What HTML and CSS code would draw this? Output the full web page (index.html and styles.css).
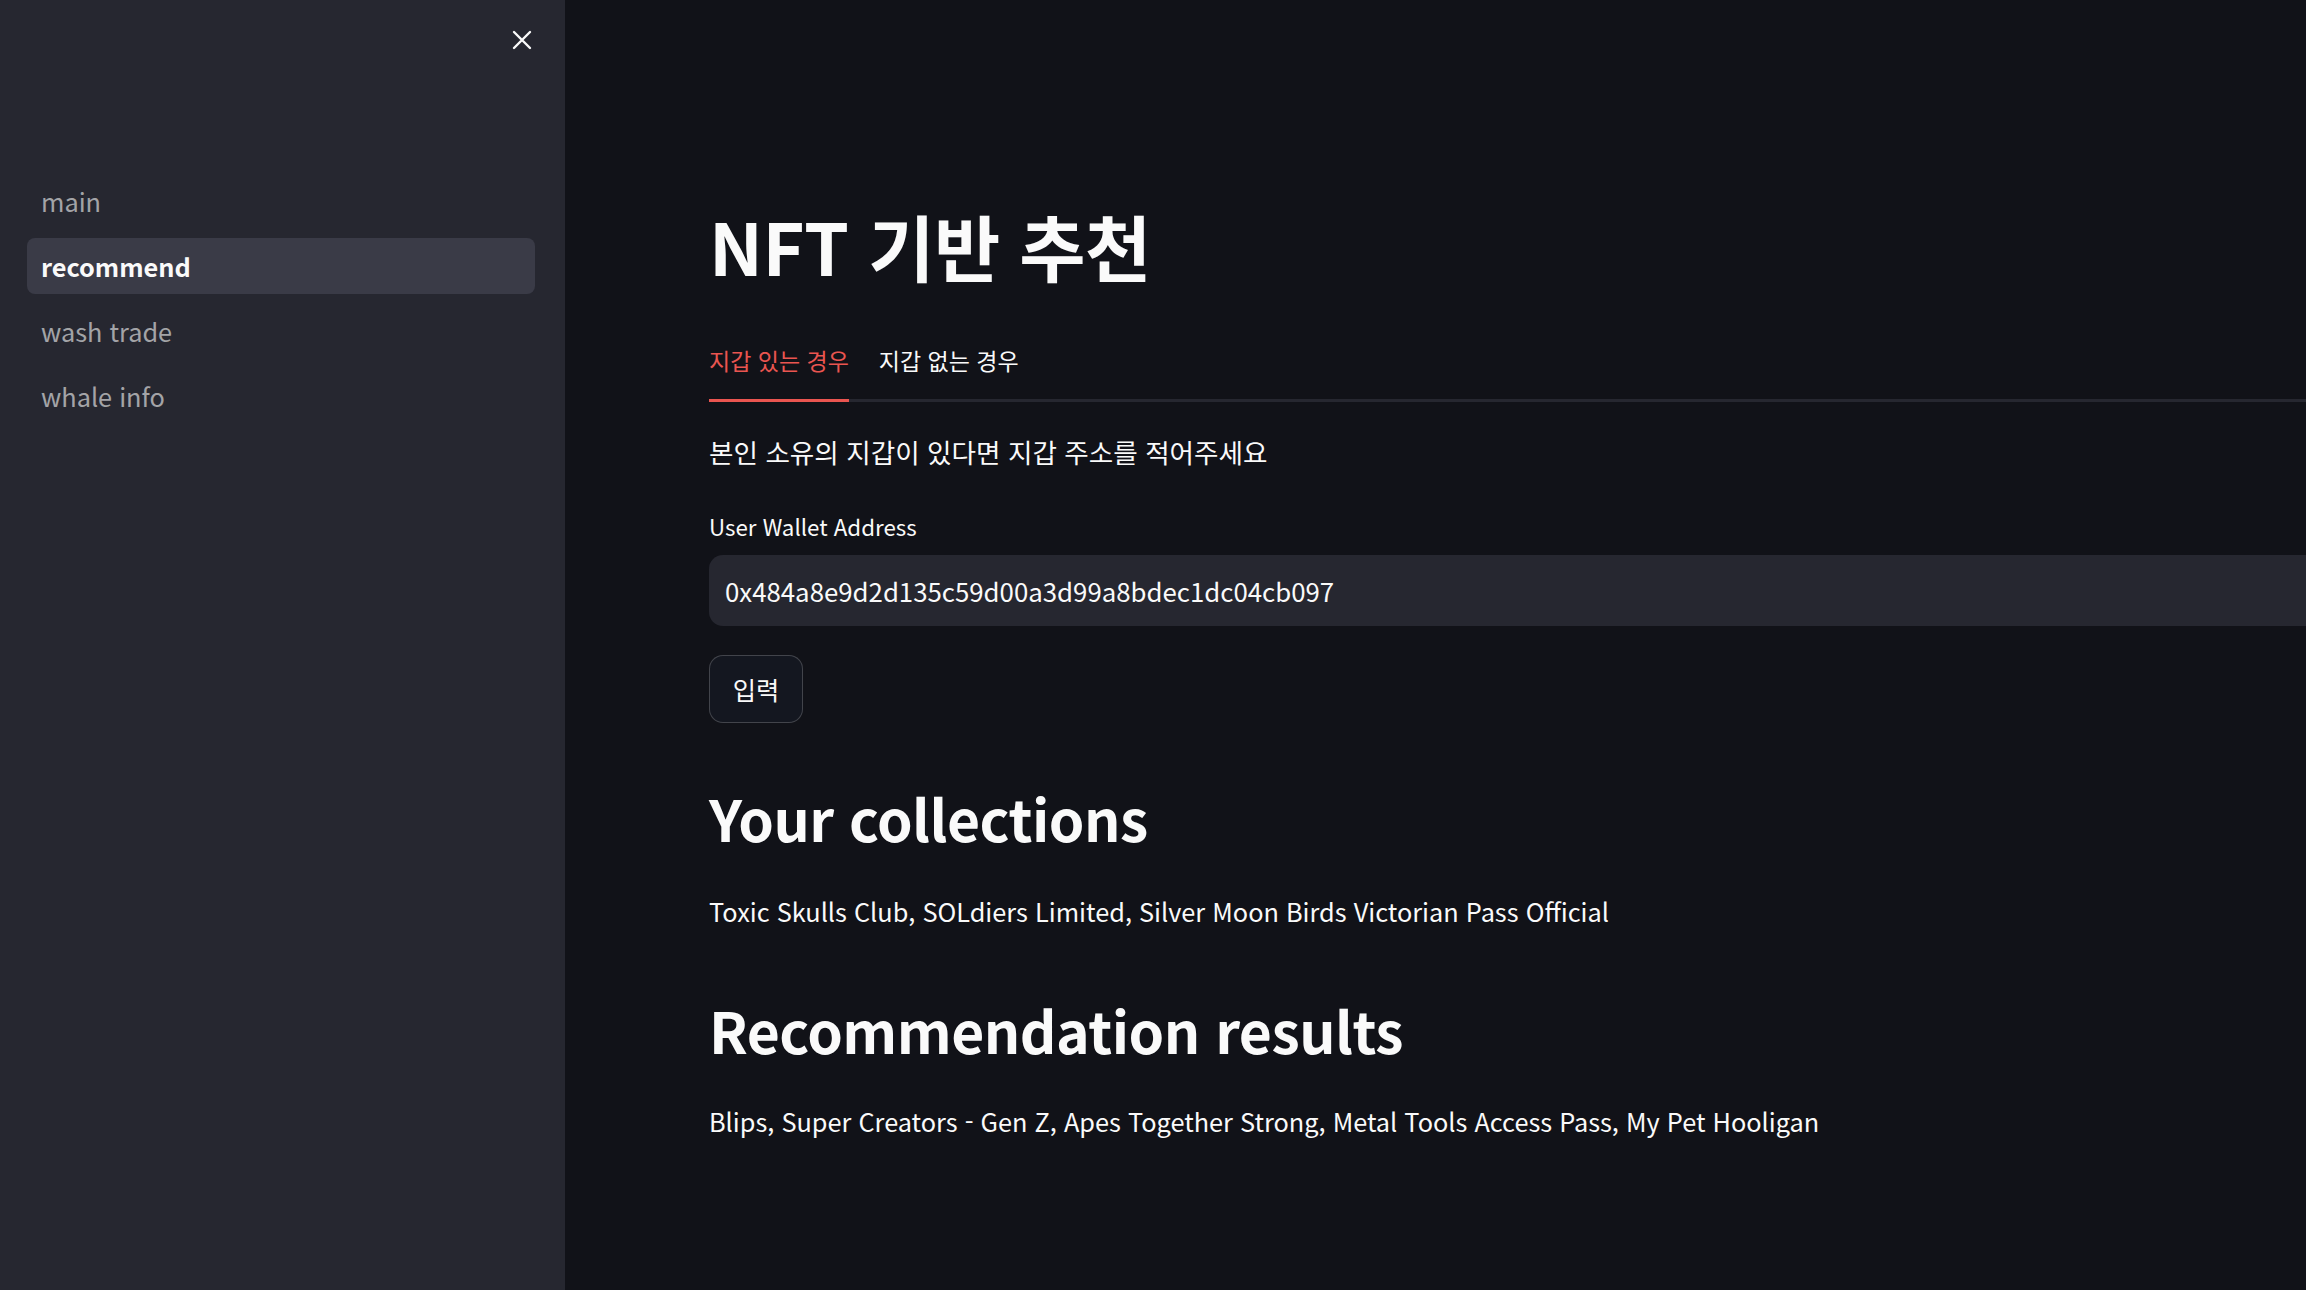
FILE: index.html
```html
<!DOCTYPE html>
<html lang="ko">
<head>
<meta charset="utf-8">
<title>recommend</title>
<link rel="stylesheet" href="styles.css">
</head>
<body>
<div class="app">
  <aside class="sidebar">
    <div class="sidebar-head">
      <button class="close-btn" aria-label="close">
        <svg width="20" height="20" viewBox="0 0 20 20"><path d="M2 2 L18 18 M18 2 L2 18" stroke="#fafafa" stroke-width="2.4" stroke-linecap="round" fill="none"/></svg>
      </button>
    </div>
    <nav class="nav">
      <a class="nav-item">main</a>
      <a class="nav-item active">recommend</a>
      <a class="nav-item">wash trade</a>
      <a class="nav-item">whale info</a>
    </nav>
  </aside>
  <main class="main">
    <div class="block">
      <h1 class="title">NFT 기반 추천</h1>
      <div class="tabs">
        <div class="tab active">지갑 있는 경우</div>
        <div class="tab">지갑 없는 경우</div>
      </div>
      <p class="intro">본인 소유의 지갑이 있다면 지갑 주소를 적어주세요</p>
      <label class="field-label">User Wallet Address</label>
      <div class="input">0x484a8e9d2d135c59d00a3d99a8bdec1dc04cb097</div>
      <button class="btn">입력</button>
      <h2 class="section">Your collections</h2>
      <p class="text">Toxic Skulls Club, SOLdiers Limited, Silver Moon Birds Victorian Pass Official</p>
      <h2 class="section second">Recommendation results</h2>
      <p class="text last">Blips, Super Creators - Gen Z, Apes Together Strong, Metal Tools Access Pass, My Pet Hooligan</p>
    </div>
  </main>
</div>
</body>
</html>
```
FILE: styles.css
```css
* { box-sizing: border-box; }
html, body {
  margin: 0;
  padding: 0;
  background: #111218;
  overflow: hidden;
}
body {
  font-family: "Noto Sans CJK KR", "Noto Sans", sans-serif;
  color: #fafafa;
}
.app {
  display: flex;
  width: 2306px;
  height: 1290px;
}
.sidebar {
  flex: 0 0 565px;
  background: #262730;
  display: flex;
  flex-direction: column;
}
.sidebar-head {
  display: flex;
  justify-content: flex-end;
  padding: 30px 33px 0 0;
  height: 173px;
}
.close-btn {
  background: none;
  border: none;
  padding: 0;
  width: 20px;
  height: 20px;
  display: flex;
}
.nav {
  display: flex;
  flex-direction: column;
  gap: 9px;
  margin: 0 30px 0 27px;
}
.nav-item {
  height: 56px;
  display: flex;
  align-items: center;
  padding-left: 14px;
  font-size: 25.3px;
  color: rgba(250, 250, 250, 0.6);
  border-radius: 8px;
}
.nav-item.active {
  background: #3a3b47;
  color: #fafafa;
  font-weight: 700;
}
.main {
  flex: 1 1 auto;
  overflow: hidden;
}
.block {
  width: 1900px;
  padding: 190px 0 0 144px;
}
.title {
  margin: 0;
  font-size: 72px;
  font-weight: 700;
  line-height: 110px;
  letter-spacing: -0.5px;
}
.tabs {
  display: flex;
  gap: 30px;
  margin-top: 43px;
  border-bottom: 3px solid #262730;
}
.tab {
  font-size: 23px;
  line-height: 34px;
  padding: 0 0 22px;
  margin-bottom: -3px;
  border-bottom: 3px solid transparent;
}
.tab.active {
  color: #ea5550;
  border-bottom-color: #ea5550;
}
.intro {
  margin: 30px 0 0;
  font-size: 26.6px;
  line-height: 40px;
}
.field-label {
  display: block;
  margin-top: 37px;
  font-size: 22.3px;
  line-height: 34px;
}
.input {
  margin-top: 12px;
  height: 71px;
  background: #262730;
  border-radius: 14px;
  padding: 0 16px;
  display: flex;
  align-items: center;
  font-size: 25.8px;
}
.btn {
  margin-top: 29px;
  width: 94px;
  height: 68px;
  background: #141720;
  border: 1px solid rgba(250, 250, 250, 0.2);
  border-radius: 14px;
  color: #fafafa;
  font-family: inherit;
  font-size: 25.3px;
  display: flex;
  align-items: center;
  justify-content: center;
}
.section {
  margin: 54px 0 0;
  font-size: 57px;
  font-weight: 700;
  line-height: 80px;
  letter-spacing: -0.5px;
}
.section.second {
  margin-top: 58px;
}
.text {
  margin: 34px 0 0;
  font-size: 25.3px;
  line-height: 40px;
}
.text.last {
  margin-top: 32px;
}
```
